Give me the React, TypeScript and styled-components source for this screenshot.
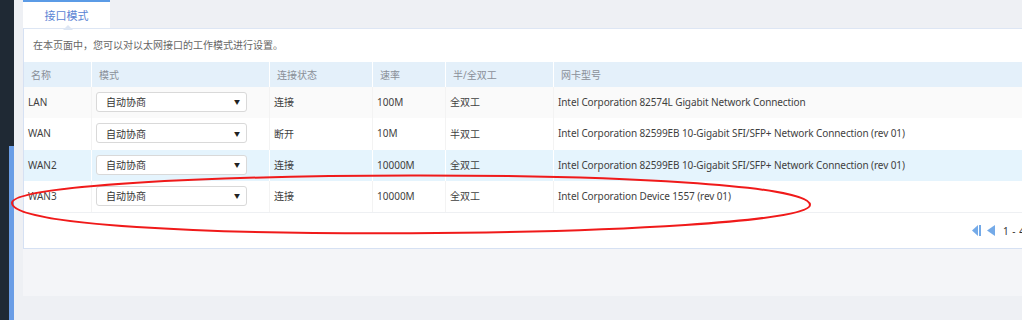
import React, { FC } from 'react'
import styled, { createGlobalStyle } from 'styled-components'

const GlobalStyle = createGlobalStyle`
    html, body {
        margin: 0;
        padding: 0;
        background: #eef0f4;
        font-family: "Noto Sans", "Noto Sans CJK SC", sans-serif;
        font-size: 10px;
        color: #444;
    }
`

interface Port {
    name: string
    status: string
    speed: string
    duplex: string
    nic: string
}

const ports: Port[] = [
    { name: 'LAN', status: '连接', speed: '100M', duplex: '全双工', nic: 'Intel Corporation 82574L Gigabit Network Connection' },
    { name: 'WAN', status: '断开', speed: '10M', duplex: '半双工', nic: 'Intel Corporation 82599EB 10-Gigabit SFI/SFP+ Network Connection (rev 01)' },
    { name: 'WAN2', status: '连接', speed: '10000M', duplex: '全双工', nic: 'Intel Corporation 82599EB 10-Gigabit SFI/SFP+ Network Connection (rev 01)' },
    { name: 'WAN3', status: '连接', speed: '10000M', duplex: '全双工', nic: 'Intel Corporation Device 1557 (rev 01)' },
]

const columns = [68, 178, 103, 73, 108]
const gridCols = columns.map(c => `${c}px`).join(' ') + ' 1fr'

const Page = styled.div`
    position: relative;
    display: flex;
    width: 1022px;
    height: 320px;
    overflow: hidden;
`

const Sidebar = styled.div`
    width: 14px;
    flex-shrink: 0;
    background: #1f2934;
    padding: 146px 0 0 9px;
    box-sizing: border-box;
    display: flex;
`

const ActiveBar = styled.div`
    flex: 1;
    background: #6a9de6;
`

const Main = styled.div`
    flex: 1;
    padding-left: 9px;
    display: flex;
    flex-direction: column;
    min-width: 0;
`

const TabBar = styled.div`
    height: 28px;
    display: flex;
`

const Tab = styled.div`
    position: relative;
    width: 87px;
    height: 26px;
    border-top: 2px solid #5b9be6;
    background: #fff;
    color: #5a84d4;
    font-size: 11px;
    display: flex;
    align-items: center;
    justify-content: center;
    &::after {
        content: '';
        position: absolute;
        left: 40px;
        bottom: -2px;
        width: 0;
        height: 0;
        border-left: 5px solid transparent;
        border-right: 5px solid transparent;
        border-bottom: 5px solid #dde6f4;
        z-index: 2;
    }
`

const Panel = styled.div`
    width: 1100px;
    background: #fff;
    border: 1px solid #d6e1f3;
    border-top-color: #dde6f4;
`

const Intro = styled.div`
    height: 33px;
    line-height: 32px;
    padding-left: 9px;
    color: #666;
    font-size: 10px;
`

const Row = styled.div<{ $bg: string; $line: string; $h: number }>`
    display: grid;
    grid-template-columns: ${gridCols};
    height: ${p => p.$h}px;
    background: ${p => p.$bg};
    & > div {
        border-right: 1px solid ${p => p.$line};
    }
`

const Cell = styled.div<{ $head?: boolean; $tight?: boolean }>`
    display: flex;
    align-items: center;
    padding-left: ${p => (p.$head ? 7 : 4)}px;
    padding-bottom: ${p => (p.$head ? 0 : 2)}px;
    color: ${p => (p.$head ? '#8a8f98' : '#3f3f3f')};
    font-size: 10px;
    letter-spacing: ${p => (p.$tight ? '-0.1px' : '0')};
    white-space: nowrap;
    overflow: hidden;
`

const Select = styled.div`
    width: 151px;
    height: 20px;
    box-sizing: border-box;
    border: 1px solid #d9d9d9;
    border-radius: 3px;
    background: #fff;
    display: flex;
    align-items: center;
    justify-content: space-between;
    padding: 0 6px 0 9px;
    color: #333;
    font-size: 10px;
`

const Caret = styled.span`
    font-size: 6px;
    color: #222;
`

const Footer = styled.div`
    height: 35px;
    border-top: 1px solid #eef0f3;
    display: flex;
    align-items: center;
    padding-left: 948px;
    gap: 6px;
`

const PageText = styled.span`
    margin-left: 2px;
    color: #333;
    font-size: 10px;
    letter-spacing: 0.5px;
`

const BottomBand = styled.div`
    height: 47px;
    background: #f4f5f8;
`

const Annotation = styled.svg`
    position: absolute;
    left: 0;
    top: 0;
    pointer-events: none;
`

const FirstIcon: FC = () => (
    <svg width="9" height="11" viewBox="0 0 9 11">
        <polygon points="6,0 6,11 0,5.5" fill="#74aae8" />
        <rect x="7" y="0" width="2" height="11" fill="#74aae8" />
    </svg>
)

const PrevIcon: FC = () => (
    <svg width="8" height="11" viewBox="0 0 8 11">
        <polygon points="8,0 8,11 0,5.5" fill="#74aae8" />
    </svg>
)

const heads = ['名称', '模式', '连接状态', '速率', '半/全双工', '网卡型号']

const App: FC = () => {
    return (
        <>
            <GlobalStyle />
            <Page>
                <Sidebar>
                    <ActiveBar />
                </Sidebar>
                <Main>
                    <TabBar>
                        <Tab>接口模式</Tab>
                    </TabBar>
                    <Panel>
                        <Intro>在本页面中，您可以对以太网接口的工作模式进行设置。</Intro>
                        <Row $bg="#e4f0fa" $line="#ffffff" $h={25}>
                            {heads.map(h => (
                                <Cell key={h} $head>
                                    {h}
                                </Cell>
                            ))}
                        </Row>
                        {ports.map((p, i) => (
                            <Row
                                key={p.name}
                                $bg={i === 0 ? '#fafafa' : i === 2 ? '#e5f4fd' : '#fff'}
                                $line={i === 2 ? '#ffffff' : '#f3f3f3'}
                                $h={i === 1 ? 32 : 31}
                            >
                                <Cell>{p.name}</Cell>
                                <Cell>
                                    <Select>
                                        自动协商
                                        <Caret>▼</Caret>
                                    </Select>
                                </Cell>
                                <Cell>{p.status}</Cell>
                                <Cell>{p.speed}</Cell>
                                <Cell>{p.duplex}</Cell>
                                <Cell $tight>{p.nic}</Cell>
                            </Row>
                        ))}
                        <Footer>
                            <FirstIcon />
                            <PrevIcon />
                            <PageText>1 - 4 共 4 条</PageText>
                        </Footer>
                    </Panel>
                    <BottomBand />
                </Main>
                <Annotation width="1022" height="320" viewBox="0 0 1022 320">
                    <path
                        d="M 12 203 C 12 168, 810 164, 810 205 C 810 238, 12 248, 12 203 Z"
                        fill="none"
                        stroke="#f01a1a"
                        strokeWidth="2"
                    />
                </Annotation>
            </Page>
        </>
    )
}

export default App
